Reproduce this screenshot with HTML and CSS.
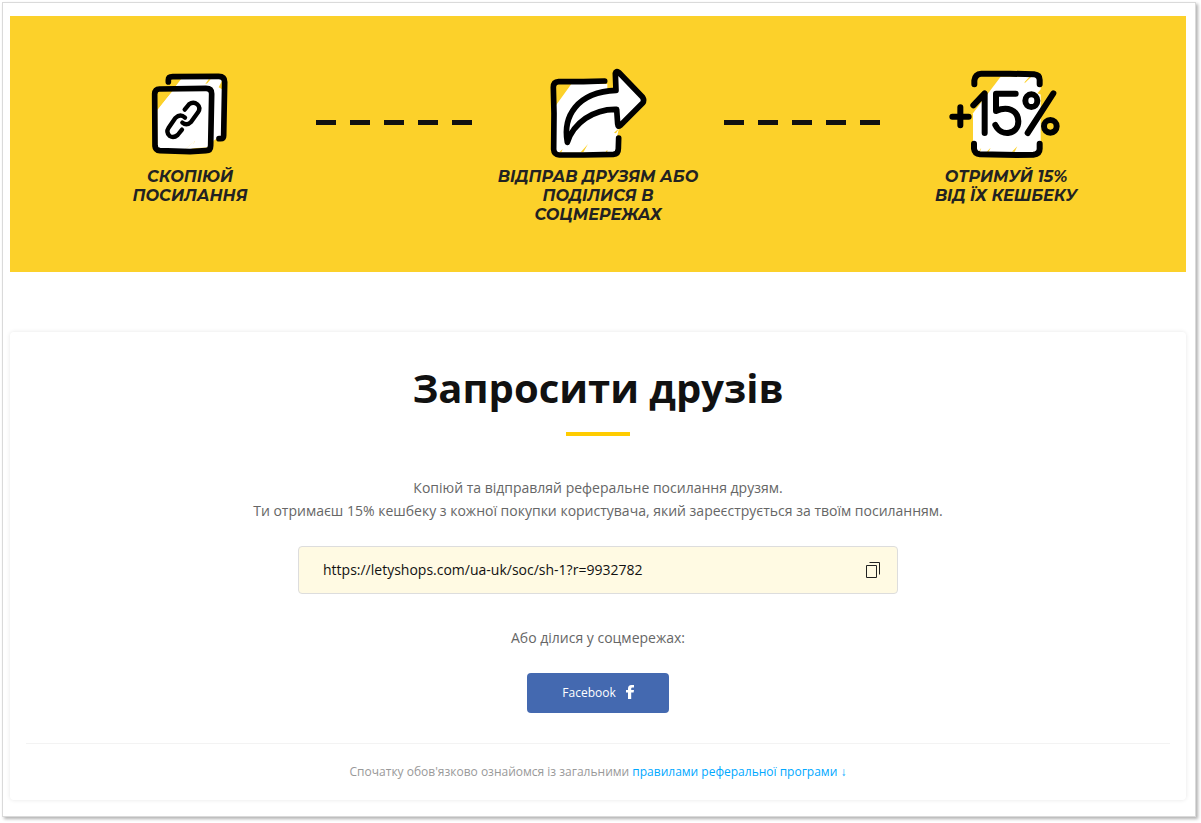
FILE: index.html
```
<!DOCTYPE html>
<html lang="uk">
<head>
    <meta charset="UTF-8">
    <meta name="viewport" content="width=device-width, initial-scale=1.0">
    <title>Запросити друзів</title>
    <link rel="stylesheet" href="styles.css">
</head>
<body>
    <main class="page">
        <section class="steps">
            <div class="step">
                <svg class="step-icon" viewBox="30 12 360 288" aria-hidden="true">
                    <path fill="#fff" d="M184 56H302L308 66L304 228L280 242L276 262L230 264L208 267L226 242L196 267H112V150Z"/>
                    <path fill="#fcd12a" d="M112 90H160L112 148ZM262 70L272 58H266L256 72ZM296 82L306 62V88Z"/>
                    <path fill="#fff" d="M196 267L224 242L214 267Z"/>
                    <g fill="none" stroke="#000" stroke-width="17" stroke-linecap="round" stroke-linejoin="round">
                        <path d="M145 66V60Q145 50 158 50L296 49Q314 49 314 66L311 226Q311 236 302 236H297"/>
                        <path d="M118 87L258 85Q275 85 275 101L272 257Q272 272 258 272L210 275L120 272Q106 271 105 258L104 102Q105 87 118 87Z"/>
                    </g>
                    <g fill="none" stroke="#000" stroke-width="13" stroke-linecap="round" stroke-linejoin="round">
                        <path d="M194 149L207 133Q220 123 232 133Q243 143 234 157L213 186Q200 199 187 188"/>
                        <path d="M195 173Q181 160 166 174L146 203Q137 217 149 228Q161 235 173 225L186 209"/>
                    </g>
                </svg>
                <p class="step-text">Скопіюй<br>посилання</p>
            </div>
            <div class="dashes"></div>
            <div class="step">
                <svg class="step-icon" viewBox="24 12 360 288" aria-hidden="true">
                    <path fill="#fff" d="M78 72H232V90L264 88V40L342 120L268 200L262 226V278H78Z"/>
                    <path fill="#fcd12a" d="M78 72H124L78 136ZM152 277L174 252L160 277ZM88 277L98 267L94 277ZM252 218L268 204L258 220ZM226 277L232 269V277Z"/>
                    <g fill="none" stroke="#000" stroke-width="17" stroke-linecap="round" stroke-linejoin="round">
                        <path d="M224 63L160 65L86 65Q70 66 70 82L72 160L71 268Q72 284 88 285L160 285L250 283Q265 282 265 266L266 234"/>
                        <path d="M112 247C98 170 140 96 258 91L256 40Q258 32 266 37L338 112Q344 121 338 129L270 197Q264 202 263 192L260 148C190 146 130 190 112 247Z"/>
                    </g>
                </svg>
                <p class="step-text">Відправ друзям або поділися в соцмережах</p>
            </div>
            <div class="dashes"></div>
            <div class="step">
                <svg class="step-icon" viewBox="48 12 360 288" aria-hidden="true">
                    <path fill="#fff" d="M212 50H322L332 84V264L324 278H134L129 240V160Z"/>
                    <path fill="#fcd12a" d="M284 70L304 50H298L284 66ZM322 100L334 86V104ZM146 275L154 263L150 275ZM170 275L182 263L176 275ZM246 275L262 259L254 275Z"/>
                    <g fill="none" stroke="#000" stroke-width="18" stroke-linecap="round" stroke-linejoin="round">
                        <path d="M133 73V62Q135 42 154 41L240 41L312 43Q330 45 329 62V73"/>
                        <path d="M132 251V266Q134 282 150 283L260 285L310 284Q329 282 329 266V251"/>
                        <path d="M67 170H116M91 142V196M130 136L164 100V219"/>
                        <path d="M257 101H198V153C232 138 264 150 265 184C265 224 214 232 196 195"/>
                        <path d="M370 100L293 219"/>
                        <ellipse cx="304" cy="122" rx="18" ry="19"/>
                        <ellipse cx="361" cy="199" rx="19" ry="19"/>
                    </g>
                </svg>
                <p class="step-text">Отримуй 15%<br>від їх кешбеку</p>
            </div>
        </section>

        <section class="invite">
            <h1>Запросити друзів</h1>
            <p class="intro">Копіюй та відправляй реферальне посилання друзям.<br>Ти отримаєш 15% кешбеку з кожної покупки користувача, який зареєструється за твоїм посиланням.</p>
            <div class="link-box">
                <input type="text" class="link-input" value="https://letyshops.com/ua-uk/soc/sh-1?r=9932782" aria-label="Реферальне посилання" readonly>
                <button type="button" class="copy-button" aria-label="Копіювати">
                    <svg width="14" height="16" viewBox="0 0 14 16" fill="none" stroke="#222" aria-hidden="true">
                        <path d="M.5 3.5H10.5V15.5H.5Z"/>
                        <path d="M3.500 .5H13.500V12.500"/>
                    </svg>
                </button>
            </div>
            <p class="share-label">Або ділися у соцмережах:</p>
            <button type="button" class="facebook-button">
                Facebook
                <svg width="8" height="14" viewBox="0 0 8 14" fill="#fff" aria-hidden="true">
                    <path d="M2 14V7.500H0V5H2V3.500Q2 0 5.500 0H8V2.500H6.500Q5.200 2.500 5.200 3.600V5H8L7.600 7.500H5.200V14Z"/>
                </svg>
            </button>
            <p class="rules">Спочатку обов'язково ознайомся із загальними <a href="#rules">правилами реферальної програми ↓</a></p>
        </section>
    </main>
</body>
</html>
```
FILE: styles.css
```
* {
    box-sizing: border-box;
}

body {
    margin: 0;
    padding: 2px 5px 5px 2px;
    background-color: #fff;
    font-family: "Open Sans", "Noto Sans", sans-serif;
    font-size: 14px;
    color: #666;
}

p, h1 {
    margin: 0;
}

.page {
    padding: 13px 9px 16px 7px;
    border: 1px solid #dadada;
    box-shadow: 2px 2px 3px rgba(0, 0, 0, 0.3);
}

.steps {
    display: flex;
    gap: 12px;
    padding: 48px 66px;
    background-color: #fcd12a;
}

.step {
    flex: 1;
    text-align: center;
}

.step-icon {
    display: block;
    width: 120px;
    height: 96px;
    margin: 0 auto 7px;
}

.step-text {
    font-family: Montserrat, Inter, sans-serif;
    font-size: 16px;
    font-weight: 700;
    font-style: italic;
    line-height: 19px;
    text-transform: uppercase;
    color: #222;
}

.dashes {
    width: 156px;
    height: 5px;
    margin-top: 56px;
    background: repeating-linear-gradient(to right, #111 0, #111 20px, transparent 20px, transparent 34px);
}

.invite {
    display: flex;
    flex-direction: column;
    align-items: center;
    margin-top: 60px;
    padding: 32px 16px 18px;
    border-radius: 4px;
    box-shadow: 0 0 4px rgba(0, 0, 0, 0.1);
    text-align: center;
}

h1 {
    font-size: 40px;
    font-weight: 700;
    line-height: 48px;
    color: #111;
}

h1::after {
    content: "";
    display: block;
    width: 64px;
    height: 4px;
    margin: 20px auto 0;
    background-color: #fc0;
}

.intro {
    margin-top: 40px;
    line-height: 23px;
}

.link-box {
    display: flex;
    align-items: center;
    width: 100%;
    max-width: 600px;
    height: 48px;
    margin-top: 24px;
    padding: 0 17px 0 24px;
    border: 1px solid #ddd;
    border-radius: 4px;
    background-color: #fffae3;
}

.link-input {
    flex: 1;
    padding: 0 0 2px;
    border: 0;
    outline: 0;
    background: none;
    font: inherit;
    color: #111;
}

.copy-button {
    display: flex;
    padding: 0;
    border: 0;
    background: none;
    cursor: pointer;
}

.share-label {
    margin-top: 32px;
    line-height: 23px;
}

.facebook-button {
    display: flex;
    align-items: center;
    justify-content: center;
    gap: 10px;
    width: 142px;
    height: 40px;
    margin-top: 24px;
    padding: 0 6px 2px;
    border: 0;
    border-radius: 4px;
    background-color: #4469b0;
    font: inherit;
    font-size: 12px;
    color: #fff;
    cursor: pointer;
}

.rules {
    width: 100%;
    margin-top: 30px;
    padding-top: 18px;
    border-top: 1px solid #f3f3f3;
    font-size: 12px;
    line-height: 20px;
    color: #999;
}

.rules a {
    color: #00a8ff;
    text-decoration: none;
}
```
